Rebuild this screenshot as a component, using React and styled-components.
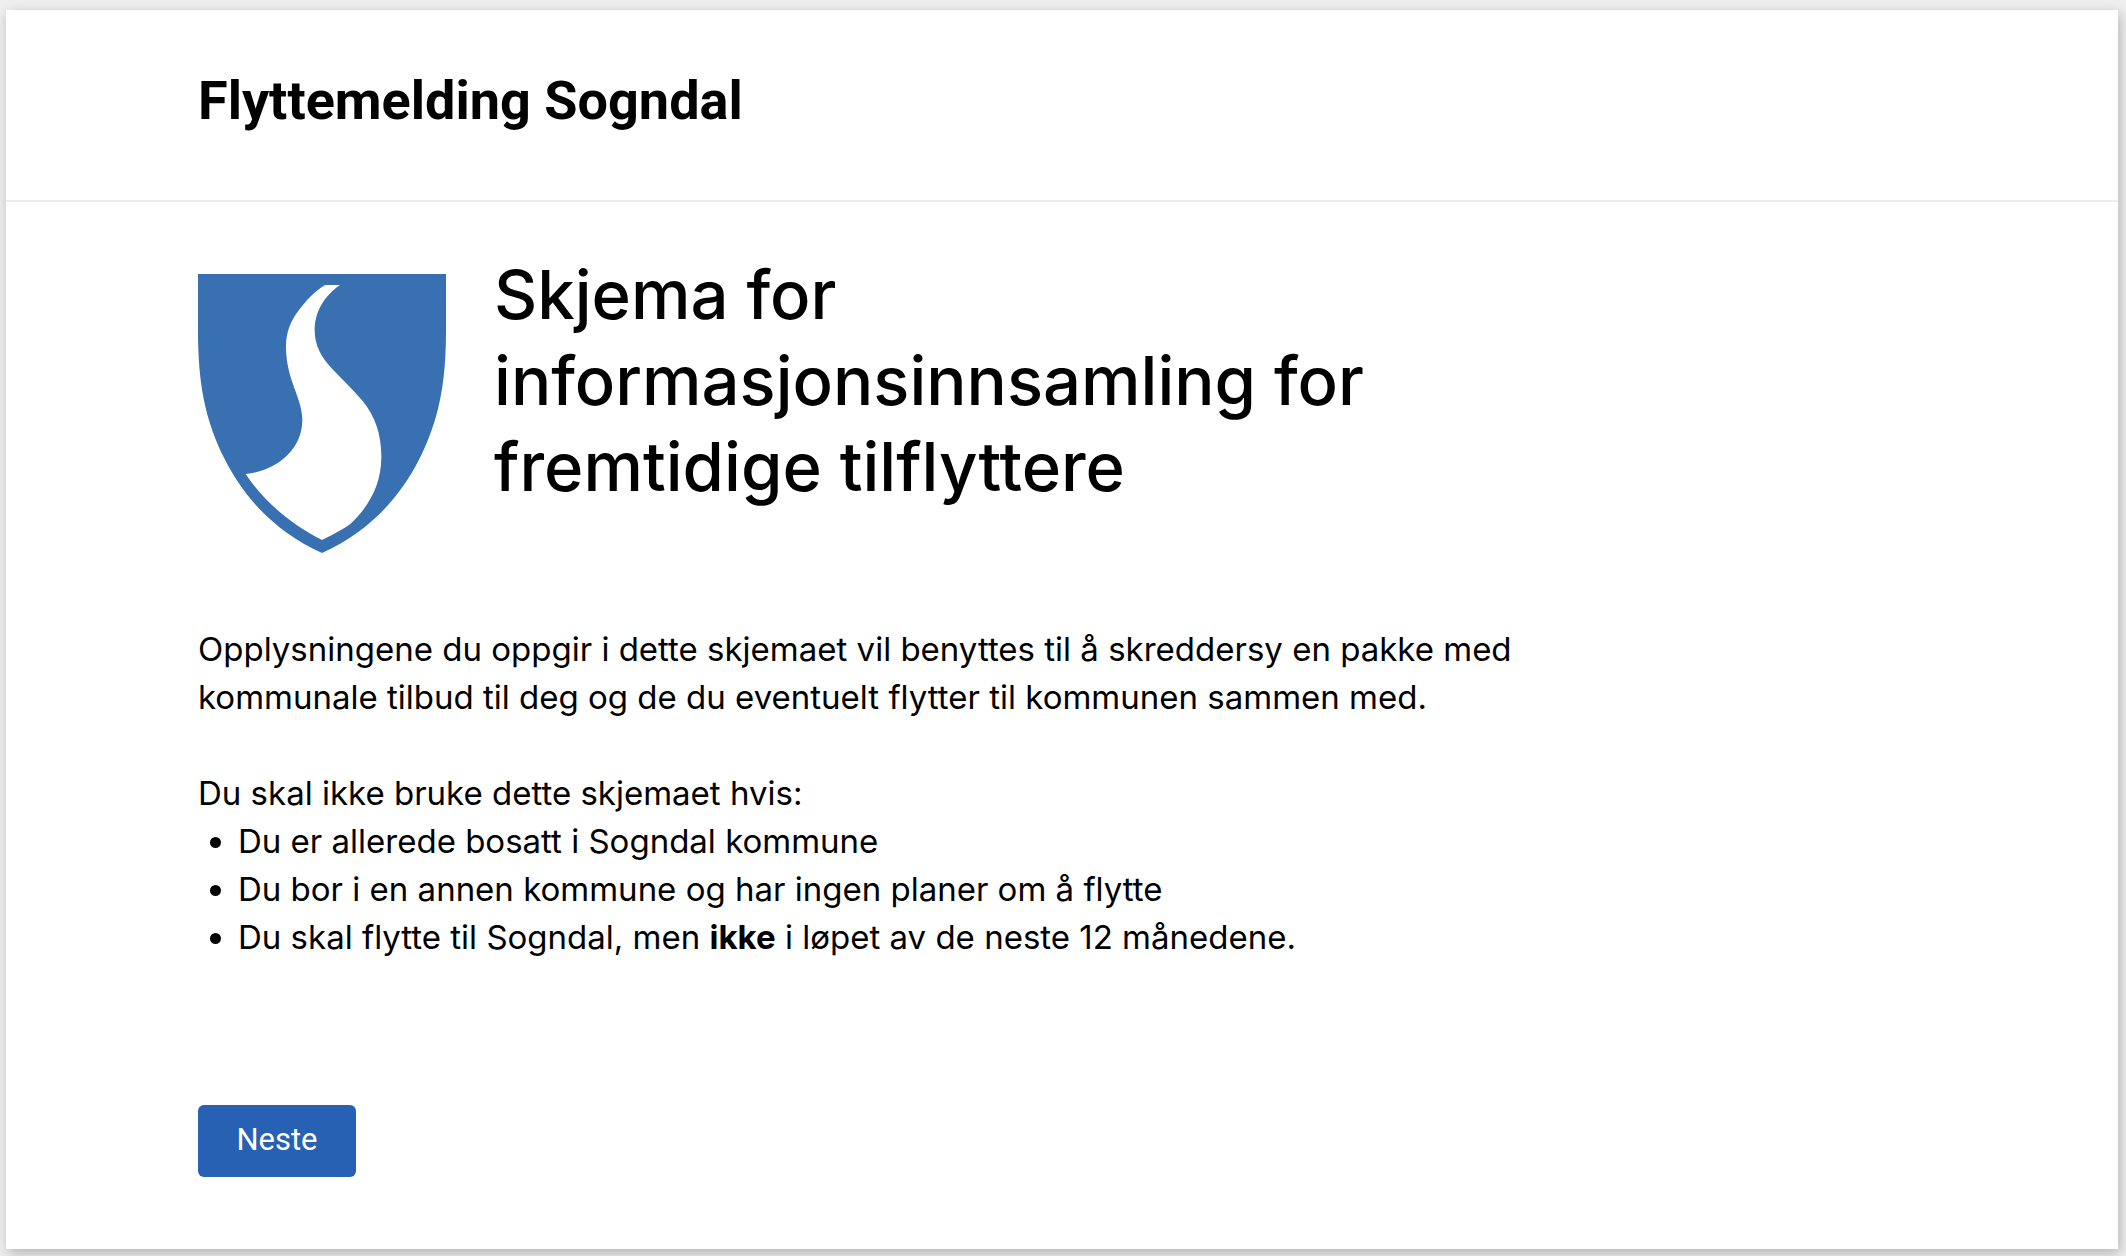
import React from "react";
import styled, { createGlobalStyle } from "styled-components";

const GlobalStyle = createGlobalStyle`
  * {
    box-sizing: border-box;
  }

  body {
    margin: 0;
    background: #efefef;
    color: #000;
    font-family: Inter, "Liberation Sans", sans-serif;
  }
`;

const Page = styled.div`
  min-height: 100vh;
  display: flex;
  padding: 10px 8px 7px 6px;
`;

const Card = styled.div`
  flex: 1;
  display: flex;
  flex-direction: column;
  background: #fff;
  box-shadow: 2px 4px 12px rgba(0, 0, 0, 0.25);
`;

const Header = styled.header`
  padding: 45px 192px 53px;
  border-bottom: 2px solid #ededed;
`;

const SiteName = styled.h1`
  margin: 0;
  font-family: Roboto, "Liberation Sans", sans-serif;
  font-size: 54px;
  line-height: 92px;
  font-weight: 700;
`;

const Content = styled.main`
  display: flex;
  flex-direction: column;
  align-items: flex-start;
  padding: 50px 192px 72px;
`;

const Intro = styled.div`
  display: flex;
  gap: 48px;
  margin-bottom: 72px;
`;

const Shield = styled.svg`
  flex: none;
  width: 248px;
  height: 279px;
  margin-top: 22px;
`;

const Title = styled.h2`
  margin: 0;
  max-width: 960px;
  font-size: 67px;
  line-height: 86px;
  font-weight: 500;
`;

const Description = styled.div`
  max-width: 1344px;
  font-size: 33px;
  line-height: 48px;
`;

const Paragraph = styled.p`
  margin: 0 0 48px;
`;

const ListIntro = styled.p`
  margin: 0;
`;

const List = styled.ul`
  margin: 0;
  padding-left: 40px;
`;

const NextButton = styled.button`
  margin-top: 144px;
  min-width: 158px;
  height: 72px;
  padding: 0 38px 2px;
  border: 0;
  border-radius: 6px;
  background: #2761b3;
  color: #fff;
  font-family: Roboto, "Liberation Sans", sans-serif;
  font-size: 31px;
  line-height: 48px;
  cursor: pointer;
`;

export default function App() {
  return (
    <>
      <GlobalStyle />
      <Page>
        <Card>
          <Header>
            <SiteName>Flyttemelding Sogndal</SiteName>
          </Header>
          <Content>
            <Intro>
              <Shield viewBox="0 0 744 837" role="img" aria-label="Sogndal kommune">
                <path
                  fill="#3870b2"
                  d="M0 0H744V170C744 330 722 440 664 555C604 674 510 775 372 837C234 775 140 674 80 555C22 440 0 330 0 170Z"
                />
                <path
                  fill="#fff"
                  d="M382 33H426C380 65 350 112 350 169C350 215 370 250 401 283C430 315 462 343 492 379C532 427 550 481 550 550C550 630 514 696 460 747C436 767 404 781 372 798C282 753 197 682 143 600C230 592 313 530 313 438C313 370 264 318 264 218C264 175 278 142 300 112C325 78 354 48 382 33Z"
                />
              </Shield>
              <Title>Skjema for informasjonsinnsamling for fremtidige tilflyttere</Title>
            </Intro>
            <Description>
              <Paragraph>
                Opplysningene du oppgir i dette skjemaet vil benyttes til å skreddersy en pakke med
                kommunale tilbud til deg og de du eventuelt flytter til kommunen sammen med.
              </Paragraph>
              <ListIntro>Du skal ikke bruke dette skjemaet hvis:</ListIntro>
              <List>
                <li>Du er allerede bosatt i Sogndal kommune</li>
                <li>Du bor i en annen kommune og har ingen planer om å flytte</li>
                <li>
                  Du skal flytte til Sogndal, men <strong>ikke</strong> i løpet av de neste 12
                  månedene.
                </li>
              </List>
            </Description>
            <NextButton type="button">Neste</NextButton>
          </Content>
        </Card>
      </Page>
    </>
  );
}
